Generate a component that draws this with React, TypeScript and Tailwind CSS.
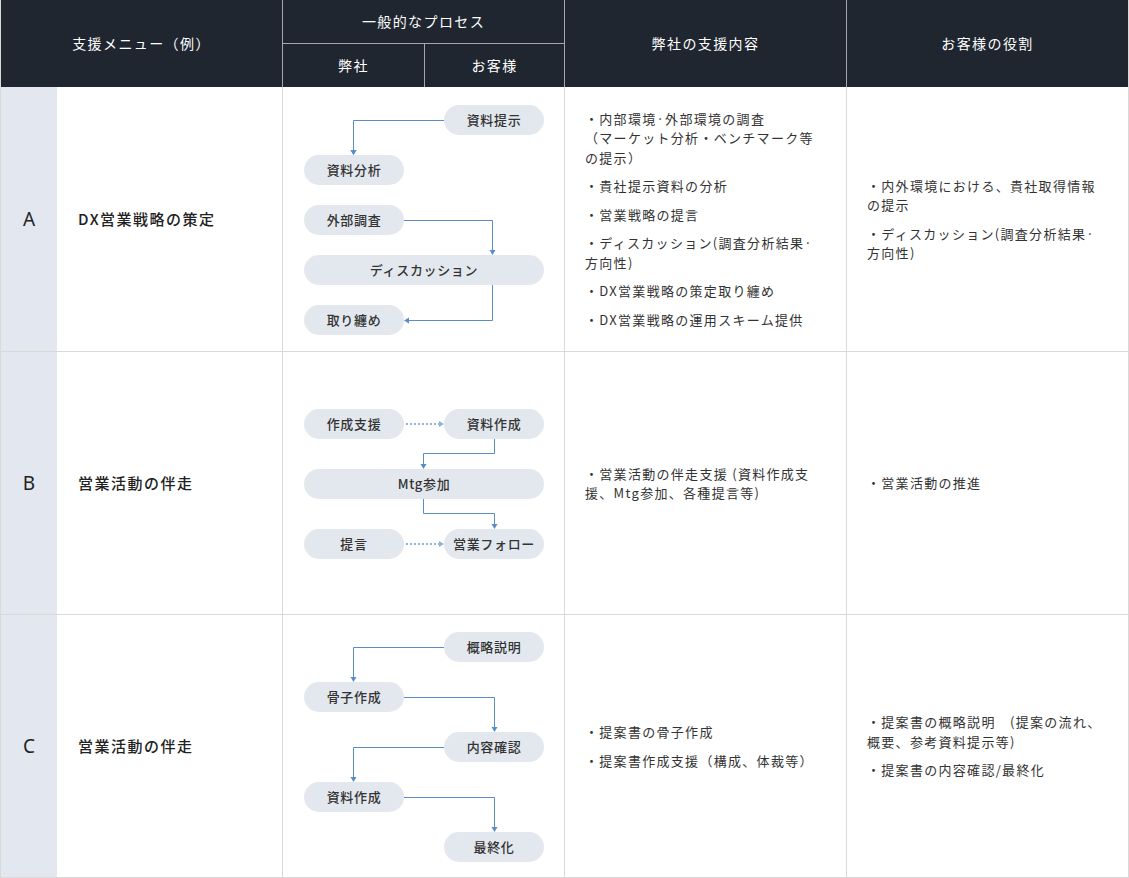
import React from "react";

type Pt = [number, number];
type NodeDef = { label: string; x: number; y: number; w?: number };
type EdgeDef = { pts: Pt[]; dotted?: boolean };

function Arrow({ pts, dotted }: EdgeDef) {
  const [x1, y1] = pts[pts.length - 2];
  const [x2, y2] = pts[pts.length - 1];
  const dx = Math.sign(x2 - x1);
  const dy = Math.sign(y2 - y1);
  const L = 5;
  const W = 3;
  const end: Pt = [x2 - dx * L, y2 - dy * L];
  const linePts = [...pts.slice(0, -1), end];
  const head =
    dx !== 0
      ? `${x2},${y2} ${x2 - dx * L},${y2 - W} ${x2 - dx * L},${y2 + W}`
      : `${x2},${y2} ${x2 - W},${y2 - dy * L} ${x2 + W},${y2 - dy * L}`;
  const color = dotted ? "#8fb3de" : "#5a8cc9";
  return (
    <g>
      <polyline
        points={linePts.map((p) => p.join(",")).join(" ")}
        fill="none"
        stroke={color}
        strokeWidth={dotted ? 2 : 1}
        strokeDasharray={dotted ? "2 2" : undefined}
      />
      <polygon points={head} fill={color} />
    </g>
  );
}

function Diagram({
  hClass,
  nodes,
  edges,
}: {
  hClass: string;
  nodes: NodeDef[];
  edges: EdgeDef[];
}) {
  return (
    <div className={`relative w-[240px] ${hClass}`}>
      <svg className="absolute left-0 top-0 h-full w-full overflow-visible">
        {edges.map((e, i) => (
          <Arrow key={i} {...e} />
        ))}
      </svg>
      {nodes.map((n, i) => (
        <div
          key={i}
          className="absolute flex h-[30px] items-center justify-center rounded-full bg-[#e3e8ef] text-[13px] font-medium tracking-[0.05em] text-[#333]"
          style={{ left: n.x, top: n.y, width: n.w ?? 100 }}
        >
          {n.label}
        </div>
      ))}
    </div>
  );
}

const diagA = {
  nodes: [
    { label: "資料提示", x: 140, y: 0 },
    { label: "資料分析", x: 0, y: 50 },
    { label: "外部調査", x: 0, y: 100 },
    { label: "ディスカッション", x: 0, y: 150, w: 240 },
    { label: "取り纏め", x: 0, y: 200 },
  ],
  edges: [
    { pts: [[140, 15.5], [49.5, 15.5], [49.5, 50]] as Pt[] },
    { pts: [[49.5, 30], [49.5, 50]] as Pt[] },
    { pts: [[100, 115.5], [188.5, 115.5], [188.5, 150]] as Pt[] },
    { pts: [[188.5, 180], [188.5, 215.5], [100, 215.5]] as Pt[] },
  ],
};

const diagB = {
  nodes: [
    { label: "作成支援", x: 0, y: 0 },
    { label: "資料作成", x: 140, y: 0 },
    { label: "Mtg参加", x: 0, y: 60, w: 240 },
    { label: "提言", x: 0, y: 120 },
    { label: "営業フォロー", x: 140, y: 120 },
  ],
  edges: [
    { pts: [[102, 15], [140, 15]] as Pt[], dotted: true },
    { pts: [[190.5, 30], [190.5, 44.5], [119.5, 44.5], [119.5, 60]] as Pt[] },
    { pts: [[119.5, 90], [119.5, 104.5], [190.5, 104.5], [190.5, 120]] as Pt[] },
    { pts: [[102, 135], [140, 135]] as Pt[], dotted: true },
  ],
};

const diagC = {
  nodes: [
    { label: "概略説明", x: 140, y: 0 },
    { label: "骨子作成", x: 0, y: 50 },
    { label: "内容確認", x: 140, y: 100 },
    { label: "資料作成", x: 0, y: 150 },
    { label: "最終化", x: 140, y: 200 },
  ],
  edges: [
    { pts: [[140, 15.5], [49.5, 15.5], [49.5, 50]] as Pt[] },
    { pts: [[100, 65.5], [190.5, 65.5], [190.5, 100]] as Pt[] },
    { pts: [[140, 115.5], [49.5, 115.5], [49.5, 150]] as Pt[] },
    { pts: [[100, 165.5], [190.5, 165.5], [190.5, 200]] as Pt[] },
  ],
};

function Bullets({ items }: { items: React.ReactNode[] }) {
  return (
    <div className="flex flex-col gap-[9px] whitespace-nowrap text-[13px] leading-[19.5px] tracking-[0.1em] text-[#333]">
      {items.map((it, i) => (
        <div key={i}>{it}</div>
      ))}
    </div>
  );
}

function Row({
  letter,
  name,
  hClass,
  diagram,
  support,
  role,
}: {
  letter: string;
  name: string;
  hClass: string;
  diagram: React.ReactNode;
  support: React.ReactNode;
  role: React.ReactNode;
}) {
  return (
    <div className={`flex border-b border-[#d9d9d9] ${hClass}`}>
      <div className="flex w-[56px] items-center justify-center bg-[#e3e8f0] font-['Noto_Sans','Noto_Sans_CJK_JP',sans-serif] text-[19px] font-normal text-[#222]">
        {letter}
      </div>
      <div className="flex w-[226px] items-center border-r border-[#d9d9d9] pl-[21px] text-[15px] font-medium tracking-[0.1em] text-[#222]">
        {name}
      </div>
      <div className="flex w-[282px] items-center border-r border-[#d9d9d9] pl-[21px] pt-[2px]">
        {diagram}
      </div>
      <div className="flex w-[282px] items-center border-r border-[#d9d9d9] px-5">
        {support}
      </div>
      <div className="flex flex-1 items-center px-5">{role}</div>
    </div>
  );
}

export default function App() {
  return (
    <div className="w-[1129px] bg-white font-['Noto_Sans_CJK_JP','Noto_Sans',sans-serif]">
      <div className="border-x border-[#d9d9d9]">
        <div className="flex h-[87px] bg-[#1f2630] text-[14px] tracking-[0.1em] text-white">
          <div className="flex w-[282px] items-center justify-center border-r border-[#a4a8ad]">
            支援メニュー（例）
          </div>
          <div className="flex w-[282px] flex-col border-r border-[#a4a8ad]">
            <div className="flex h-[44px] items-center justify-center border-b border-[#a4a8ad]">
              一般的なプロセス
            </div>
            <div className="flex flex-1">
              <div className="flex w-[142px] items-center justify-center border-r border-[#a4a8ad]">
                弊社
              </div>
              <div className="flex flex-1 items-center justify-center">お客様</div>
            </div>
          </div>
          <div className="flex w-[282px] items-center justify-center border-r border-[#a4a8ad]">
            弊社の支援内容
          </div>
          <div className="flex flex-1 items-center justify-center">お客様の役割</div>
        </div>

        <Row
          letter="A"
          name="DX営業戦略の策定"
          hClass="h-[265px]"
          diagram={<Diagram hClass="h-[230px]" nodes={diagA.nodes} edges={diagA.edges} />}
          support={
            <Bullets
              items={[
                <>
                  ・内部環境·外部環境の調査
                  <br />
                  （マーケット分析・ベンチマーク等
                  <br />
                  の提示）
                </>,
                "・貴社提示資料の分析",
                "・営業戦略の提言",
                <>
                  ・ディスカッション(調査分析結果·
                  <br />
                  方向性)
                </>,
                "・DX営業戦略の策定取り纏め",
                "・DX営業戦略の運用スキーム提供",
              ]}
            />
          }
          role={
            <Bullets
              items={[
                <>
                  ・内外環境における、貴社取得情報
                  <br />
                  の提示
                </>,
                <>
                  ・ディスカッション(調査分析結果·
                  <br />
                  方向性)
                </>,
              ]}
            />
          }
        />
        <Row
          letter="B"
          name="営業活動の伴走"
          hClass="h-[263px]"
          diagram={<Diagram hClass="h-[150px]" nodes={diagB.nodes} edges={diagB.edges} />}
          support={
            <Bullets
              items={[
                <>
                  ・営業活動の伴走支援 (資料作成支
                  <br />
                  援、Mtg参加、各種提言等)
                </>,
              ]}
            />
          }
          role={<Bullets items={["・営業活動の推進"]} />}
        />
        <Row
          letter="C"
          name="営業活動の伴走"
          hClass="h-[263px]"
          diagram={<Diagram hClass="h-[230px]" nodes={diagC.nodes} edges={diagC.edges} />}
          support={
            <Bullets items={["・提案書の骨子作成", "・提案書作成支援（構成、体裁等）"]} />
          }
          role={
            <Bullets
              items={[
                <>
                  ・提案書の概略説明　(提案の流れ、
                  <br />
                  概要、参考資料提示等)
                </>,
                "・提案書の内容確認/最終化",
              ]}
            />
          }
        />
      </div>
    </div>
  );
}
